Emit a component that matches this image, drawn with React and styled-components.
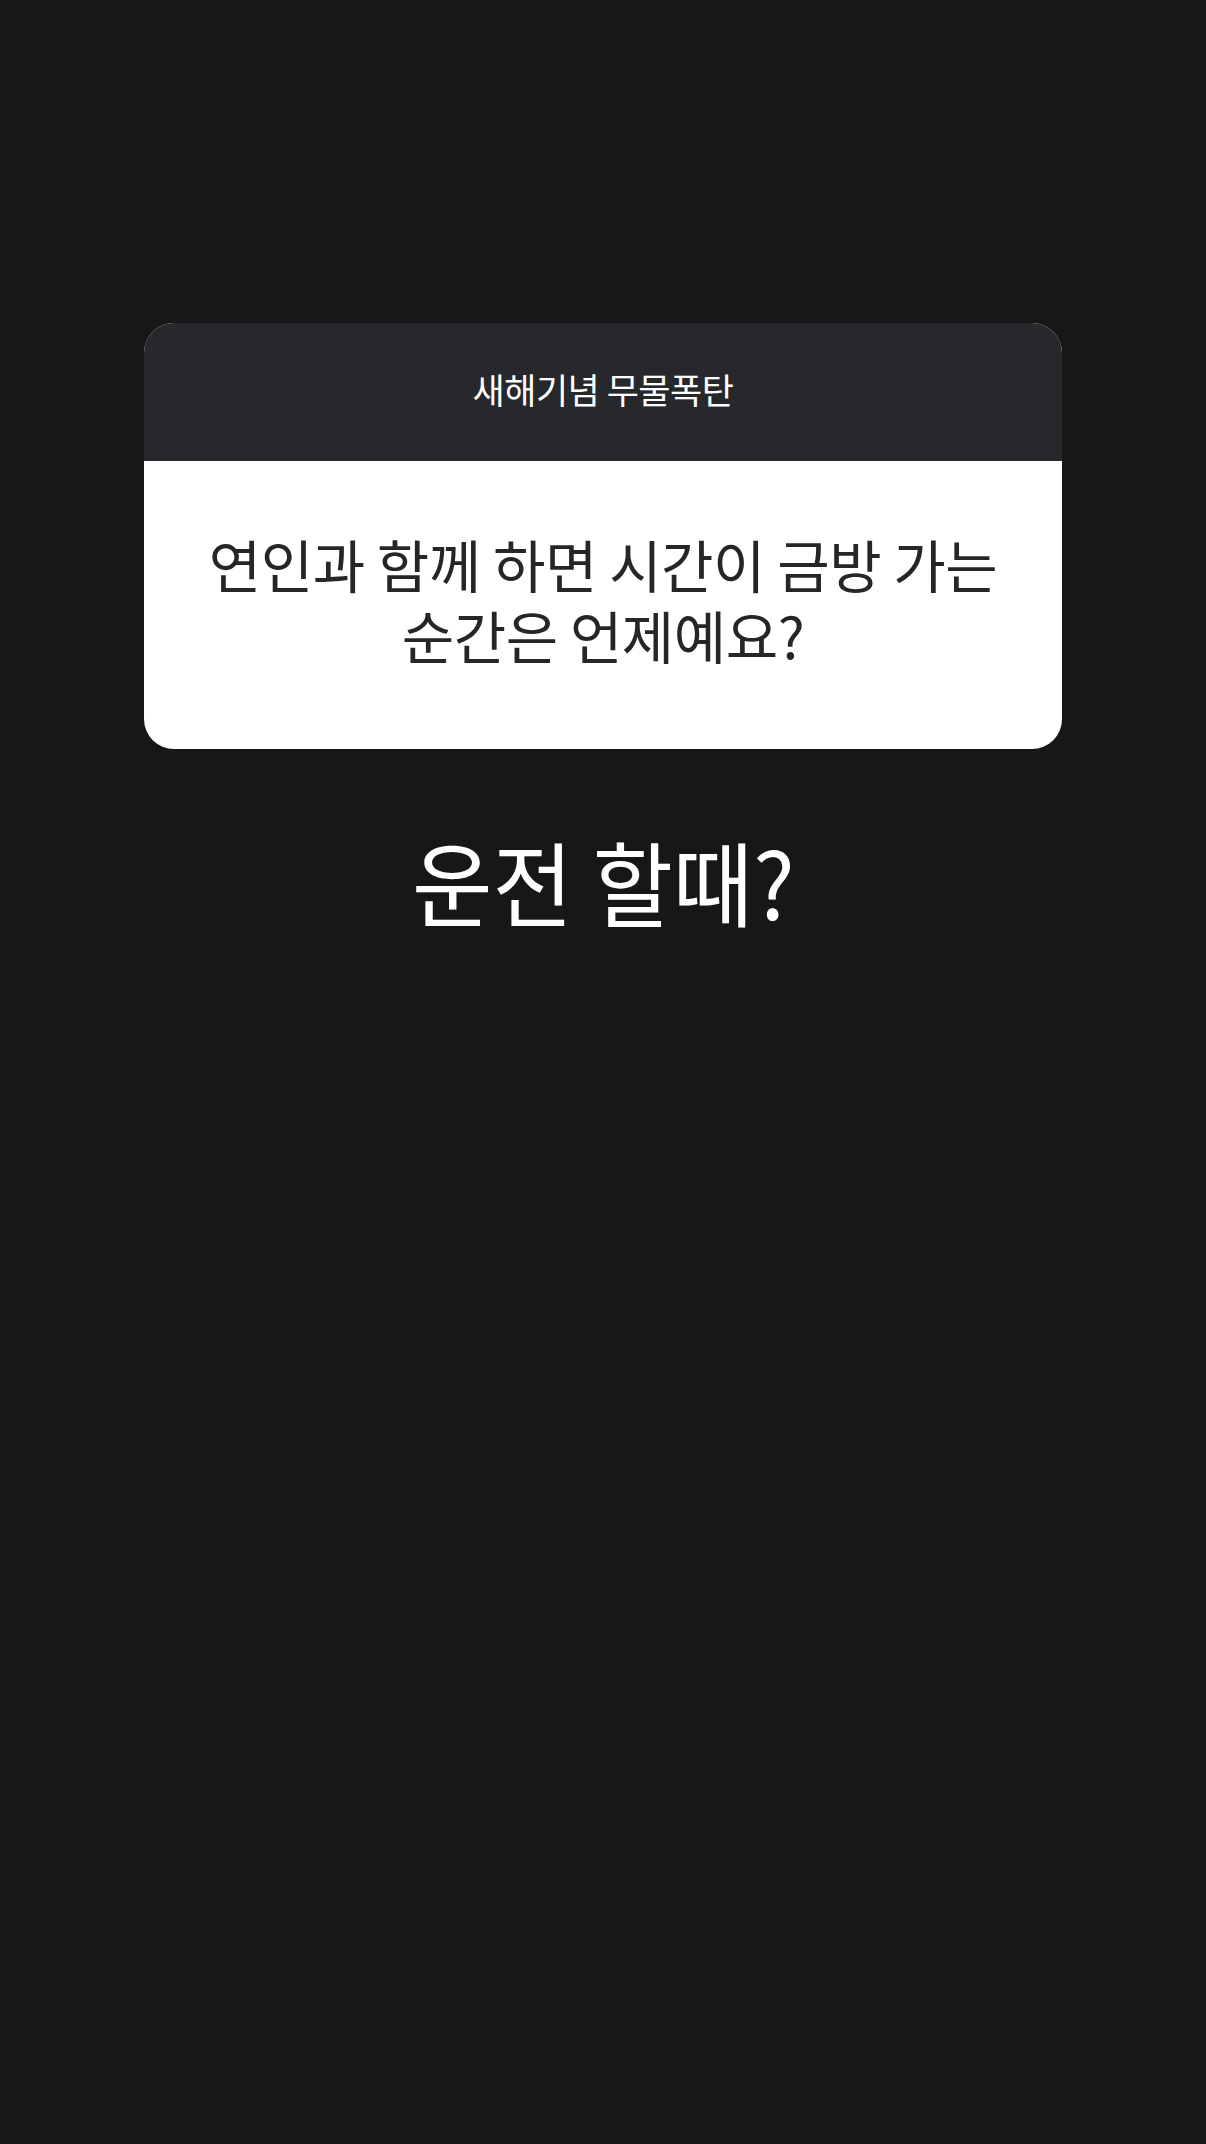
import React from 'react';
import styled, { createGlobalStyle } from 'styled-components';

const GlobalStyle = createGlobalStyle`
  html, body {
    margin: 0;
    padding: 0;
    background: #171717;
  }
  body {
    font-family: "Noto Sans CJK KR", "Noto Sans", sans-serif;
  }
`;

const StyledPage = styled.div`
  min-height: 2144px;
  background: #171717;
  display: flex;
  flex-direction: column;
  align-items: center;
  padding-top: 323px;
  box-sizing: border-box;
`;

const StyledCard = styled.div`
  width: 918px;
  border-radius: 30px;
  overflow: hidden;
  background: #fff;
`;

const StyledHeader = styled.div`
  height: 138px;
  padding-bottom: 8px;
  box-sizing: border-box;
  background: #26282c;
  color: #fff;
  display: flex;
  align-items: center;
  justify-content: center;
  font-size: 35px;
  font-weight: 400;
  letter-spacing: -0.5px;
`;

const StyledQuestion = styled.div`
  height: 288px;
  display: flex;
  flex-direction: column;
  align-items: center;
  justify-content: center;
  padding: 0 40px 12px;
  box-sizing: border-box;
  text-align: center;
  color: #262629;
  font-size: 57px;
  letter-spacing: -0.5px;
`;

const StyledLine = styled.span`
  display: block;
  height: 71px;
  line-height: 71px;
  white-space: nowrap;
`;

const StyledAnswer = styled.div`
  margin-top: 66px;
  color: #fff;
  font-size: 92px;
  font-weight: 400;
  line-height: 130px;
  transform: scaleX(0.95);
  white-space: nowrap;
`;

const App = () => {
  return (
    <StyledPage>
      <GlobalStyle />
      <StyledCard>
        <StyledHeader>새해기념 무물폭탄</StyledHeader>
        <StyledQuestion>
          <StyledLine>연인과 함께 하면 시간이 금방 가는</StyledLine>
          <StyledLine>순간은 언제예요?</StyledLine>
        </StyledQuestion>
      </StyledCard>
      <StyledAnswer>운전 할때?</StyledAnswer>
    </StyledPage>
  );
};

export default App;
